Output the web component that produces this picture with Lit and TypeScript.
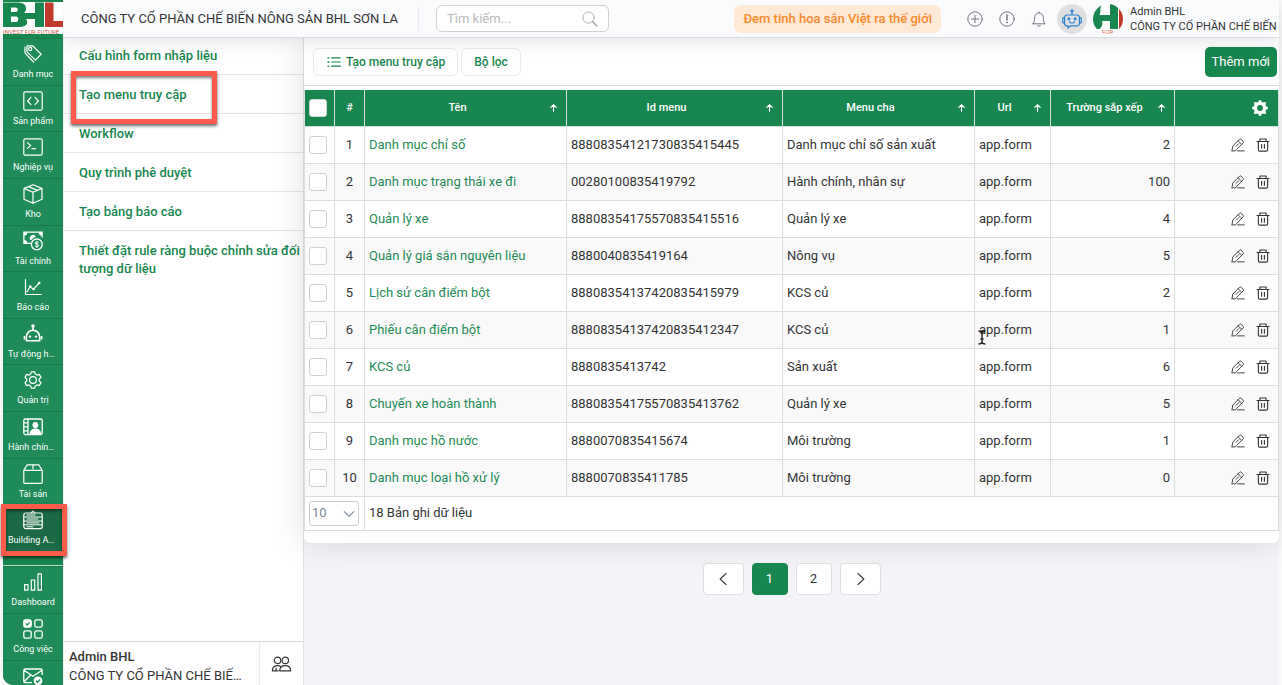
import { LitElement, html, svg, css } from "lit";
import { customElement, state } from "lit/decorators.js";

const line = (body: unknown) => html`<svg viewBox="0 0 20 20" fill="none" stroke="currentColor" stroke-width="1.2" stroke-linecap="round" stroke-linejoin="round" aria-hidden="true">${body}</svg>`;

const icons: Record<string, unknown> = {
  tags: line(svg`<path d="M4 1.8h5.6l8.6 8.4-5.8 6-8.4-8.4z"/><circle cx="7.2" cy="5" r="1.6"/><path d="M2 3v5.8l8.6 9.2"/>`),
  code: line(svg`<rect x=".8" y=".8" width="18.4" height="18.4" rx="1.5"/><path d="M8 6.4 4.6 10 8 13.6M12 6.4l3.4 3.6-3.4 3.6"/>`),
  terminal: line(svg`<rect x=".8" y="1.8" width="18.4" height="16.4" rx="1.5"/><path d="m4.4 5.6 3.2 2.9-3.2 2.9M8.8 11.6h3.8"/>`),
  box: line(svg`<path d="m10 .8 9 3.6v10.8l-9 4-9-4V4.400z M1 4.400l9 3.800 9-3.800M10 8.200v11M5.500 2.600l9 3.800"/>`),
  cash: html`<svg viewBox="0 0 20 20" fill="none" stroke="currentColor" stroke-width="1.3" aria-hidden="true"><path d="M8 12.400H.9V1.200h18.200v5.200"/><path d="M1 4.600A3.400 3.400 0 0 0 4.400 1.200H1zM19 4.600a3.400 3.400 0 0 1-3.400-3.400H19zM1 9a3.400 3.400 0 0 1 3.400 3.400H1z" fill="currentColor" stroke="none"/><path d="M7.800 9a2.800 2.800 0 1 1 4.600-3.200" fill="currentColor"/><circle cx="13.800" cy="13.400" r="5.400"/><path d="M15.600 11.800c-.8-1.300-3.400-1-3.400.3 0 1.600 3.500.9 3.500 2.500 0 1.400-2.800 1.700-3.700.2M13.900 10v6.800" stroke-width="1"/></svg>`,
  chart: line(svg`<path d="M2.500 2.500v15h15.500M4 14.800l3.200-5 3.400 2.400L16.200 6"/><g fill="currentColor"><circle cx="7.200" cy="9.600" r=".7"/><circle cx="10.600" cy="12" r=".7"/><circle cx="16.200" cy="6" r=".7"/></g>`),
  robot: html`<svg viewBox="0 0 20 20" fill="none" stroke="currentColor" stroke-width="1.600" aria-hidden="true"><circle cx="10" cy="2" r="1" fill="currentColor"/><path d="M10 2.800V6M3.400 16.800v-4A6.600 6.600 0 0 1 10 6.200a6.600 6.600 0 0 1 6.600 6.600v4zM1.400 12v3.600M18.600 12v3.600"/><circle cx="7" cy="12.600" r="1.200" fill="currentColor" stroke="none"/><circle cx="13" cy="12.600" r="1.200" fill="currentColor" stroke="none"/></svg>`,
  gear: line(svg`<circle cx="10" cy="10" r="3.400"/><path d="m8.300 1.800-.6 2.300-1.700 1-2.300-.7L2 7.400 3.700 9v2L2 12.600l1.700 3 2.300-.7 1.700 1 .6 2.300h3.400l.6-2.300 1.700-1 2.300.7 1.700-3-1.700-1.600V9L18 7.400l-1.700-3-2.300.7-1.700-1-.6-2.300z"/>`),
  contact: html`<svg viewBox="0 0 20 20" fill="none" stroke="currentColor" stroke-width="1.300" aria-hidden="true"><rect x=".8" y="2" width="18.400" height="15.600" rx="1.500"/><path d="M5 2v15.600M.8 5.800H5M.8 9.800H5M.8 13.800H5"/><circle cx="12.400" cy="8" r="2.900" fill="currentColor" stroke="none"/><path d="M6.400 17.400c.4-3.800 2.800-5.800 6-5.800s5.600 2 6 5.800z" fill="currentColor" stroke="none"/></svg>`,
  parcel: line(svg`<path d="M.8 6.400h18.400v12.200a.8.8 0 0 1-.8.8H1.600a.8.8 0 0 1-.8-.8zM.8 6.400l3.400-5.600h11.600l3.400 5.600M10 .8v4"/>`),
  form: line(svg`<rect x=".8" y="3" width="18.400" height="15.600" rx="2"/><path d="M1 7h18M1 11h18M1 14.800h18M4 5h8M4 9h11M4 12.900h12M4 16.800h6" stroke-width="1"/><path d="m8.200 2.800 1.800-2 1.800 2"/>`),
  bars: line(svg`<rect x="1.600" y="12.600" width="3.400" height="5.600"/><rect x="8.300" y="8" width="3.400" height="10.200"/><rect x="15" y="1.800" width="3.400" height="16.400"/>`),
  tasks: html`<svg viewBox="0 0 20 20" fill="none" stroke="currentColor" stroke-width="1.300" aria-hidden="true"><rect x=".8" y=".8" width="7.400" height="7.400" rx="1.800" fill="currentColor"/><rect x="11.800" y=".8" width="7.400" height="7.400" rx="1.800"/><rect x=".8" y="11.800" width="7.400" height="7.400" rx="1.800"/><rect x="11.800" y="11.800" width="7.400" height="7.400" rx="1.800"/><path d="m2.800 4.600 1.400 1.400L6.600 3.400" stroke="#1e8b57"/></svg>`,
  mail: html`<svg viewBox="0 0 20 20" fill="none" stroke="currentColor" stroke-width="1.300" aria-hidden="true"><path d="M19.200 9V4.400A1.500 1.500 0 0 0 17.700 3H2.300A1.500 1.500 0 0 0 .8 4.400v10.800a1.500 1.500 0 0 0 1.500 1.500H9M1 4.200l9 6 9-6M1 16l6.400-6.800"/><circle cx="15" cy="14.800" r="4.400" fill="currentColor" stroke="none"/><path d="m13 14.800 1.500 1.500 2.600-2.800" stroke="#1e8b57"/></svg>`,
  search: line(svg`<circle cx="8.200" cy="8.200" r="7"/><path d="m13.400 13.400 5.400 5.400" stroke-width="2"/>`),
  plus: line(svg`<circle cx="10" cy="10" r="9"/><path d="M10 5.400v9.200M5.400 10h9.200"/>`),
  alert: line(svg`<circle cx="10" cy="10" r="9"/><path d="M10 5v6.200" stroke-width="1.800"/><circle cx="10" cy="14.400" r=".6" fill="currentColor"/>`),
  bell: line(svg`<path d="M2.400 16h15.200c-1.600-1.600-2-3.400-2.200-8.200a5.400 5.400 0 0 0-10.800 0C4.400 12.600 4 14.400 2.400 16zM10 2.200V1M8.200 18.200c.6 1.200 3 1.200 3.600 0"/>`),
  bot: line(svg`<path d="M5 6h10a2.400 2.400 0 0 1 2.400 2.400v6A2.400 2.400 0 0 1 15 16.800H8.600L6 19v-2.200H5a2.400 2.400 0 0 1-2.400-2.400v-6A2.400 2.400 0 0 1 5 6zM10 6V3.200M2.400 8.800H.8v5h1.600M17.600 8.800h1.600v5h-1.600M7.400 12.800c1.400 1.400 3.800 1.400 5.200 0"/><circle cx="10" cy="2" r="1.200"/><circle cx="6.800" cy="9.800" r="1"/><circle cx="13.200" cy="9.800" r="1"/>`),
  list: line(svg`<path d="M6.600 4H19M6.600 10H19M6.600 16H19" stroke-width="1.700"/><path d="M1.400 4h1.400M1.400 10h1.400M1.400 16h1.400" stroke-width="1.900"/>`),
  up: line(svg`<path d="M10 18V3M4 8.600l6-6 6 6" stroke-width="2.600"/>`),
  cog: html`<svg viewBox="0 0 16 16" fill="currentColor" aria-hidden="true"><path d="M9.405 1.050c-.413-1.400-2.397-1.400-2.810 0l-.1.340a1.464 1.464 0 0 1-2.105.872l-.310-.170c-1.283-.698-2.686.705-1.987 1.987l.169.311c.446.820.023 1.841-.872 2.105l-.340.100c-1.400.413-1.400 2.397 0 2.810l.340.100a1.464 1.464 0 0 1 .872 2.105l-.170.310c-.698 1.283.705 2.686 1.987 1.987l.311-.169a1.464 1.464 0 0 1 2.105.872l.100.340c.413 1.400 2.397 1.400 2.810 0l.100-.340a1.464 1.464 0 0 1 2.105-.872l.310.170c1.283.698 2.686-.705 1.987-1.987l-.169-.311a1.464 1.464 0 0 1 .872-2.105l.340-.100c1.400-.413 1.400-2.397 0-2.810l-.340-.100a1.464 1.464 0 0 1-.872-2.105l.170-.310c.698-1.283-.705-2.686-1.987-1.987l-.311.169a1.464 1.464 0 0 1-2.105-.872zM8 10.930a2.929 2.929 0 1 1 0-5.860 2.929 2.929 0 0 1 0 5.858z"/></svg>`,
  edit: line(svg`<path d="m1.500 17.500 1-6L12.300 1.700a1.400 1.400 0 0 1 2 0l3.200 3.200a1.400 1.400 0 0 1 0 2L8 16.400 6.400 18.400H1.500zM10.200 4l5 5M7.400 11.800l3.800-3.800M9.400 18.400H19" stroke-width="1.300"/>`),
  trash: line(svg`<path d="M1.400 5h17.200M5.600 5V1.400h8.800V5M3.400 5v11.800a2 2 0 0 0 2 2h9.200a2 2 0 0 0 2-2V5M8 9v5.600M12 9v5.600" stroke-width="1.600"/>`),
  down: line(svg`<path d="m2 6 8 8 8-8" stroke-width="1.800"/>`),
  prev: line(svg`<path d="m13.500 2.500-8 7.500 8 7.500" stroke-width="1.500"/>`),
  next: line(svg`<path d="m6.500 2.500 8 7.500-8 7.500" stroke-width="1.500"/>`),
  people: line(svg`<circle cx="6" cy="6.400" r="3.200"/><circle cx="13.800" cy="6.400" r="3.200"/><path d="M9.400 12.600C8.400 11.800 7 11.400 5.600 11.600 2.600 11.800.8 13.600.8 16.800h6M8.200 16.800c0-3.400 2.200-5.200 5.400-5.200s5.600 1.800 5.600 5.200zM4.600 14v2.800"/>`),
};

const modules = [
  ["tags", "Danh mục"], ["code", "Sản phẩm"], ["terminal", "Nghiệp vụ"], ["box", "Kho"],
  ["cash", "Tài chính"], ["chart", "Báo cáo"], ["robot", "Tự động hóa"], ["gear", "Quản trị"],
  ["contact", "Hành chính nhân sự"], ["parcel", "Tài sản"], ["form", "Building App"],
];
const shortcuts = [["bars", "Dashboard"], ["tasks", "Công việc"], ["mail", ""]];
const submenu = [
  "Cấu hình form nhập liệu", "Tạo menu truy cập", "Workflow", "Quy trình phê duyệt",
  "Tạo bảng báo cáo", "Thiết đặt rule ràng buộc chỉnh sửa đối tượng dữ liệu",
];
const columns = ["Tên", "Id menu", "Menu cha", "Url", "Trường sắp xếp"];
const rows: [string, string, string, number][] = [
  ["Danh mục chỉ số", "88808354121730835415445", "Danh mục chỉ số sản xuất", 2],
  ["Danh mục trạng thái xe đi", "00280100835419792", "Hành chính, nhân sự", 100],
  ["Quản lý xe", "88808354175570835415516", "Quản lý xe", 4],
  ["Quản lý giá sắn nguyên liệu", "8880040835419164", "Nông vụ", 5],
  ["Lịch sử cân điểm bột", "88808354137420835415979", "KCS củ", 2],
  ["Phiếu cân điểm bột", "88808354137420835412347", "KCS củ", 1],
  ["KCS củ", "8880835413742", "Sản xuất", 6],
  ["Chuyến xe hoàn thành", "88808354175570835413762", "Quản lý xe", 5],
  ["Danh mục hồ nước", "8880070835415674", "Môi trường", 1],
  ["Danh mục loại hồ xử lý", "8880070835411785", "Môi trường", 0],
];

@customElement("app-root")
export class AppRoot extends LitElement {
  @state() private page = 1;

  static styles = css`
    :host { display: block; height: 100vh; overflow: hidden; background: #fafafb; color: #333436; font: 13px/18px Roboto, sans-serif; }
    * { box-sizing: border-box; }
    a { text-decoration: none; color: inherit; }
    button, input, select { font: inherit; color: inherit; margin: 0; }
    button { cursor: pointer; padding: 0; border: 0; background: none; }
    svg { display: block; width: 100%; height: 100%; }
    .shell { height: 100%; padding: 0 3px; display: grid; grid-template-columns: 60px minmax(0, 1fr); }
    .rail { min-height: 0; display: flex; flex-direction: column; background: #18864f; border-bottom-left-radius: 10px; color: #fff; position: relative; z-index: 4; }
    .brand { flex: none; height: 38px; padding: 2px 0 4px; }
    .modules { flex: none; height: 513px; display: flex; flex-direction: column; }
    .module { flex: 1; min-height: 0; position: relative; display: flex; flex-direction: column; align-items: center; gap: 2px; padding: 5px 5px 0; background: #1e8b58; border-top: 1px solid #147a46; font-size: 9px; line-height: 14px; }
    .module .glyph { flex: none; width: 20px; height: 20px; margin-bottom: 1px; }
    .module .name { max-width: 100%; overflow: hidden; text-overflow: ellipsis; white-space: nowrap; }
    .module.active { background: #1b6a45; }
    .shortcuts { flex: 1; min-height: 0; overflow: hidden; margin-top: 14px; border-top: 1px solid #b9dcc9; border-bottom-left-radius: 10px; }
    .shortcuts .module { height: 47px; }
    .callout { position: absolute; border: 5px solid #fc5b4c; box-shadow: 0 2px 3px rgba(0,0,0,.6), inset 0 2px 3px rgba(0,0,0,.5); pointer-events: none; }
    .module .callout { inset: -1px -4px -5px -2px; }
    .entry .callout { top: -4px; left: 7px; width: 146px; height: 53px; }

    .work { min-width: 0; min-height: 0; display: grid; grid-template-rows: 38px minmax(0, 1fr); }
    .top { position: relative; z-index: 3; display: flex; align-items: center; background: #fafbfd; border-bottom: 1px solid #d8dde3; box-shadow: 0 2px 20px rgba(0,0,0,.12); white-space: nowrap; padding-left: 18px; }
    .company { flex: none; margin: 0; font-size: 13px; font-weight: 400; width: 338px; line-height: 24px; border-right: 1px solid #e6e8eb; }
    .search { flex: none; display: flex; align-items: center; width: 173px; height: 27px; margin-left: 17px; padding: 0 10px; border: 1px solid #cfd1d3; border-radius: 6px; background: #fff; }
    .search input { flex: 1; min-width: 0; padding: 0; border: 0; outline: 0; background: none; }
    .search input::placeholder { color: #b9babc; opacity: 1; }
    .search .glyph { width: 16px; height: 16px; color: #aaacae; }
    .slogan { margin-left: auto; padding: 5px 9px; border-radius: 7px; background: #fee8d6; color: #f98a2b; font-weight: 500; }
    .tools { display: flex; align-items: center; gap: 16px; margin-left: 26px; color: #707275; }
    .tools button { width: 16px; height: 16px; }
    .bot { flex: none; width: 30px; height: 30px; margin-left: 10px; padding: 5px; border-radius: 50%; background: #dfe0e2; color: #2a80d0; }
    .avatar { flex: none; width: 30px; height: 30px; margin: 0 7px 0 6px; border-radius: 50%; overflow: hidden; }
    .who { flex: none; width: 149px; font-size: 11px; line-height: 15px; }

    .body { min-height: 0; display: grid; grid-template-columns: 241px minmax(0, 1fr); }
    .side { min-height: 0; display: flex; flex-direction: column; background: #fff; border-left: 1px solid #eee; border-right: 1px solid #e3e4e6; }
    .entries { flex: 1; display: flex; flex-direction: column; }
    .entry { position: relative; padding: 11px 0 9px 15px; border-bottom: 1px solid #e4e5e7; color: #18864f; font-weight: 500; }
    .entry:first-child { padding-top: 9px; }
    .entry:last-child { border-bottom: 0; }
    .account { flex: none; height: 44px; display: grid; grid-template-columns: minmax(0, 1fr) 44px; border-top: 1px solid #d5d6d8; }
    .account .id { padding: 5px 14px 0 5px; line-height: 19px; }
    .account .id div { overflow: hidden; white-space: nowrap; text-overflow: ellipsis; }
    .account .id .strong { font-weight: 500; }
    .account button { border-left: 1px solid #eaebec; padding: 12px 11px; }
    .account .glyph { display: block; width: 21px; height: 20px; }

    .main { position: relative; z-index: 2; min-width: 0; background: #f3f3f8; }
    .card { background: #fff; border-radius: 0 0 6px 6px; box-shadow: 0 0 34px rgba(0,0,0,.13); padding-bottom: 12px; }
    .bar { display: flex; align-items: center; gap: 3px; height: 48px; padding: 0 2px 0 9px; border-bottom: 1px solid #d9dadc; }
    .chip { display: flex; align-items: center; gap: 4px; height: 28px; padding: 0 12px; border: 1px solid #eaeaf2; border-radius: 6px; color: #18864f; font-size: 12px; font-weight: 500; }
    .chip .glyph { width: 16px; height: 14px; }
    .add { margin-left: auto; height: 30px; padding: 0 7px; border-radius: 5px; background: #18864f; color: #fff; }
    .grid { width: 100%; margin-top: 4px; table-layout: fixed; border-collapse: collapse; }
    .c-check, .c-no { width: 30px; }
    .c-name { width: 202px; } .c-id { width: 216px; } .c-parent { width: 192px; } .c-url { width: 76px; } .c-sort { width: 124px; }
    .grid td, .grid th { height: 37px; padding: 0 4px; border: 1px solid #dcdddf; white-space: nowrap; }
    .grid th { height: 36px; background: #18864f; color: #fff; border-top: 0; border-bottom: 0; font-size: 11px; font-weight: 500; }
    .grid tbody tr:nth-child(even) { background: #f9f9f9; }
    .head { display: flex; align-items: center; }
    .head .label { flex: 1; padding-right: 3px; text-align: center; }
    .head .arrow { width: 9px; height: 10px; margin-right: 4px; }
    .center { text-align: center; }
    .num { text-align: right; }
    .link { color: #1e8b58; }
    .tick { display: block; appearance: none; width: 18px; height: 18px; border: 1px solid #cfd0d2; border-radius: 3px; background: #fff; }
    .acts { display: flex; justify-content: flex-end; gap: 11px; padding-right: 4px; }
    .acts button { width: 14px; height: 14px; }
    .acts .cog { width: 16px; height: 16px; margin-right: 2px; }
    .grid .foot td { height: 34px; }
    .pick { position: relative; display: block; width: 50px; }
    .pick select { display: block; appearance: none; width: 50px; height: 25px; padding: 0 2px; border: 1px solid #cfd0d2; border-radius: 3px; background: #fff; color: #7a8796; }
    .pick .glyph { position: absolute; right: 4px; top: 7px; width: 12px; height: 12px; color: #7a8796; pointer-events: none; }
    .pages { display: flex; justify-content: center; gap: 8px; margin-top: 20px; }
    .pages button { width: 36px; height: 32px; border: 1px solid #dddde0; border-radius: 4px; background: #fff; }
    .pages .step { width: 41px; padding: 7px 12px; }
    .pages .on { background: #18864f; border-color: #18864f; color: #fff; }
    .pointer { position: absolute; left: 673px; top: 292px; width: 10px; height: 15px; color: #222; }
  `;

  private module([icon, name]: string[]) {
    const active = name === "Building App";
    return html`<a class="module ${active ? "active" : ""}" href="#"><span class="glyph">${icons[icon]}</span><span class="name">${name}</span>${active ? html`<span class="callout"></span>` : ""}</a>`;
  }

  private go(n: number) { this.page = Math.min(2, Math.max(1, n)); }

  render() {
    return html`<div class="shell">
      <nav class="rail" aria-label="Modules">
        <div class="brand"><svg viewBox="0 0 60 32" role="img" aria-label="BHL">
          <rect width="60" height="32" fill="#fff"/>
          <path fill="#18864f" fill-rule="evenodd" d="M0 .5h14c6 0 9 2 9 6 0 2-.6 3.300-2 4.500h11V.5h9V25h-9v-8h-9c.8 1 1.200 2 1.200 3 0 3.500-3 5-9 5H0zm8 5v4.500h4.500c3 0 3-4.500 0-4.500zm0 9V20h5c3 0 3-5.500 0-5.500z"/>
          <path fill="#c0392b" d="M42 .5h8.500v18.500H60v6H42z"/>
          <text x="0" y="31.500" font-size="6" fill="#d0604f" font-family="Roboto">INVEST FOR FUTURE</text>
        </svg></div>
        <div class="modules">${modules.map((m) => this.module(m))}</div>
        <div class="shortcuts">${shortcuts.map((m) => this.module(m))}</div>
      </nav>
      <div class="work">
        <header class="top">
          <h1 class="company">CÔNG TY CỔ PHẦN CHẾ BIẾN NÔNG SẢN BHL SƠN LA</h1>
          <label class="search"><input type="search" placeholder="Tìm kiếm..." aria-label="Tìm kiếm"><span class="glyph">${icons.search}</span></label>
          <span class="slogan">Đem tinh hoa sắn Việt ra thế giới</span>
          <div class="tools">
            <button aria-label="Thêm">${icons.plus}</button><button aria-label="Thông tin">${icons.alert}</button><button aria-label="Thông báo">${icons.bell}</button>
          </div>
          <button class="bot" aria-label="Trợ lý">${icons.bot}</button>
          <span class="avatar"><svg viewBox="0 0 30 30" aria-hidden="true"><rect width="30" height="30" fill="#fff"/><path fill="#18864f" d="M0 0h9C7.500 3 7 5 7.500 7.500L6.500 11H17V0h8v25h-8v-8H9c1 3 0 6-2.500 8H0z"/><path fill="#c0392b" d="M26 0h4v25h-4z"/><text x="9" y="30" font-size="6" fill="#d0604f" font-family="Roboto">FOR</text></svg></span>
          <div class="who"><div>Admin BHL</div><div>CÔNG TY CỔ PHẦN CHẾ BIẾN</div></div>
        </header>
        <div class="body">
          <aside class="side">
            <nav class="entries" aria-label="Building App">${submenu.map((s, i) => html`<a class="entry" href="#">${s}${i === 1 ? html`<span class="callout"></span>` : ""}</a>`)}</nav>
            <div class="account">
              <div class="id"><div class="strong">Admin BHL</div><div>CÔNG TY CỔ PHẦN CHẾ BIẾN NÔNG SẢN BHL SƠN LA</div></div>
              <button aria-label="Người dùng"><span class="glyph">${icons.people}</span></button>
            </div>
          </aside>
          <main class="main">
            <section class="card">
              <div class="bar">
                <button class="chip"><span class="glyph">${icons.list}</span>Tạo menu truy cập</button>
                <button class="chip">Bộ lọc</button>
                <button class="add">Thêm mới</button>
              </div>
              <table class="grid">
                <colgroup><col class="c-check"><col class="c-no"><col class="c-name"><col class="c-id"><col class="c-parent"><col class="c-url"><col class="c-sort"><col></colgroup>
                <thead><tr>
                  <th><input class="tick" type="checkbox" aria-label="Chọn tất cả"></th><th>#</th>
                  ${columns.map((c) => html`<th><div class="head"><span class="label">${c}</span><span class="arrow">${icons.up}</span></div></th>`)}
                  <th><div class="acts"><button class="cog" aria-label="Cài đặt">${icons.cog}</button></div></th>
                </tr></thead>
                <tbody>
                  ${rows.map(([name, id, parent, sort], i) => html`<tr>
                    <td><input class="tick" type="checkbox" aria-label="Chọn ${name}"></td>
                    <td class="center">${i + 1}</td>
                    <td><a class="link" href="#">${name}</a></td>
                    <td>${id}</td><td>${parent}</td><td>app.form</td><td class="num">${sort}</td>
                    <td><div class="acts"><button aria-label="Sửa">${icons.edit}</button><button aria-label="Xóa">${icons.trash}</button></div></td>
                  </tr>`)}
                </tbody>
                <tfoot><tr class="foot">
                  <td colspan="2"><label class="pick"><select aria-label="Số dòng"><option>10</option><option>20</option></select><span class="glyph">${icons.down}</span></label></td>
                  <td colspan="6">18 Bản ghi dữ liệu</td>
                </tr></tfoot>
              </table>
            </section>
            <nav class="pages" aria-label="Phân trang">
              <button class="step" aria-label="Trang trước" @click=${() => this.go(this.page - 1)}>${icons.prev}</button>
              ${[1, 2].map((n) => html`<button class=${n === this.page ? "on" : ""} @click=${() => this.go(n)}>${n}</button>`)}
              <button class="step" aria-label="Trang sau" @click=${() => this.go(this.page + 1)}>${icons.next}</button>
            </nav>
            <span class="pointer"><svg viewBox="0 0 10 15" fill="none" stroke="currentColor" stroke-width="1.400"><path d="M1.500 1C3.500 1 5 1.500 5 3c0-1.500 1.500-2 3.500-2M5 3v9M1.500 14C3.500 14 5 13.500 5 12c0 1.500 1.500 2 3.500 2M3.400 9h3.200"/></svg></span>
          </main>
        </div>
      </div>
    </div>`;
  }
}
